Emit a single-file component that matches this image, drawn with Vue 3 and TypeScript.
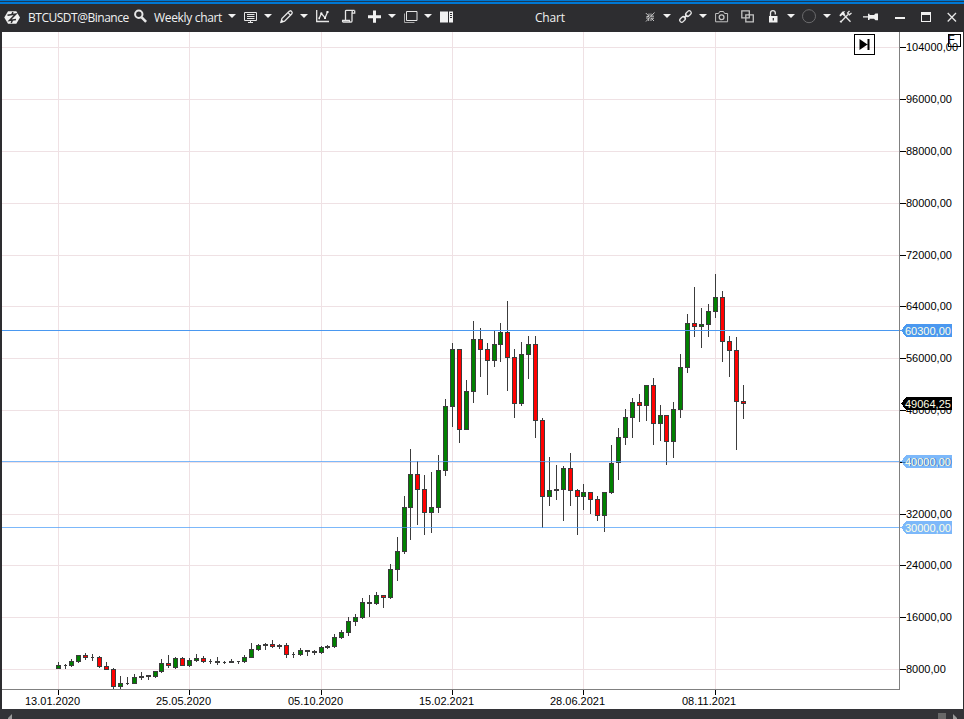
<script setup lang="ts">
type Tone = 'up' | 'down' | 'flat'
type Row = [x: number, high: number, top: number, bottom: number, low: number, kind: string]

const rows: Row[] = [
  [58, 662, 665, 669, 669, 'g'], [65, 664, 665, 666, 669, 'd'], [71, 659, 661, 666, 667, 'g'],
  [78, 655, 655, 662, 663, 'g'], [85, 653, 655, 658, 660, 'r'], [92, 654, 657, 658, 661, 'd'],
  [99, 656, 657, 667, 668, 'r'], [106, 662, 666, 670, 670, 'r'], [113, 668, 669, 687, 689, 'r'],
  [120, 676, 683, 687, 689, 'g'], [127, 677, 683, 684, 685, 'd'], [134, 674, 677, 684, 684, 'g'],
  [141, 672, 676, 678, 680, 'f'], [148, 675, 675, 677, 680, 'f'], [155, 671, 671, 677, 678, 'g'],
  [161, 659, 663, 672, 673, 'g'], [168, 655, 663, 666, 668, 'r'], [175, 657, 658, 668, 669, 'g'],
  [182, 657, 658, 666, 666, 'r'], [189, 658, 660, 666, 667, 'g'], [196, 654, 658, 661, 662, 'g'],
  [203, 656, 658, 662, 663, 'r'], [210, 659, 661, 662, 664, 'd'], [217, 657, 661, 663, 665, 'f'],
  [224, 661, 662, 663, 664, 'd'], [231, 659, 661, 663, 663, 'f'], [238, 661, 661, 662, 664, 'd'],
  [244, 655, 657, 662, 663, 'g'], [251, 643, 649, 658, 658, 'g'], [258, 644, 645, 650, 651, 'g'],
  [265, 643, 644, 646, 650, 'f'], [272, 640, 644, 647, 648, 'r'], [279, 644, 645, 647, 649, 'f'],
  [286, 643, 645, 655, 658, 'r'], [293, 652, 654, 655, 658, 'd'], [300, 648, 650, 655, 656, 'g'],
  [307, 650, 650, 652, 656, 'f'], [314, 650, 651, 653, 655, 'f'], [321, 646, 647, 653, 654, 'g'],
  [327, 645, 646, 648, 649, 'f'], [334, 634, 637, 647, 648, 'g'], [341, 630, 632, 638, 639, 'g'],
  [348, 617, 621, 633, 636, 'g'], [355, 614, 617, 622, 626, 'g'], [362, 598, 602, 618, 619, 'g'],
  [369, 595, 602, 604, 617, 'f'], [376, 592, 595, 604, 605, 'g'], [383, 595, 595, 598, 608, 'r'],
  [390, 564, 569, 598, 599, 'g'], [397, 537, 551, 570, 581, 'g'], [404, 496, 507, 552, 554, 'g'],
  [410, 449, 474, 508, 540, 'g'], [417, 461, 474, 490, 525, 'r'], [424, 475, 489, 513, 535, 'r'],
  [431, 472, 507, 513, 533, 'g'], [438, 455, 470, 508, 513, 'g'], [445, 399, 406, 471, 476, 'g'],
  [452, 343, 349, 407, 427, 'g'], [459, 349, 349, 430, 443, 'r'], [466, 380, 391, 430, 430, 'g'],
  [473, 321, 339, 392, 403, 'g'], [480, 328, 339, 350, 377, 'r'], [487, 343, 349, 361, 395, 'r'],
  [494, 331, 344, 361, 367, 'g'], [500, 323, 332, 345, 362, 'g'], [507, 301, 332, 358, 391, 'r'],
  [514, 349, 357, 404, 418, 'r'], [521, 342, 354, 404, 406, 'g'], [528, 336, 344, 355, 379, 'g'],
  [535, 336, 344, 421, 438, 'r'], [542, 418, 420, 497, 528, 'r'], [549, 457, 490, 497, 506, 'g'],
  [556, 465, 489, 491, 500, 'f'], [563, 466, 468, 490, 521, 'g'], [570, 453, 468, 491, 506, 'r'],
  [577, 489, 490, 497, 535, 'r'], [583, 484, 492, 497, 510, 'g'], [590, 492, 492, 500, 514, 'r'],
  [597, 496, 499, 516, 521, 'r'], [604, 492, 492, 516, 532, 'g'], [611, 445, 463, 493, 494, 'g'],
  [618, 428, 437, 463, 480, 'g'], [625, 409, 417, 438, 445, 'g'], [632, 398, 402, 418, 438, 'g'],
  [639, 394, 402, 406, 422, 'r'], [646, 385, 385, 406, 421, 'g'], [653, 378, 385, 424, 445, 'r'],
  [660, 405, 415, 424, 441, 'g'], [666, 415, 415, 442, 465, 'r'], [673, 402, 409, 442, 458, 'g'],
  [680, 354, 367, 410, 418, 'g'], [687, 314, 323, 368, 373, 'g'], [694, 287, 323, 327, 337, 'r'],
  [701, 308, 324, 327, 348, 'g'], [708, 304, 311, 325, 337, 'g'], [715, 274, 297, 312, 318, 'g'],
  [722, 291, 297, 342, 362, 'r'], [729, 336, 341, 351, 377, 'r'], [736, 337, 350, 402, 450, 'r'],
  [743, 385, 401, 404, 419, 'r'],
]

const tones: Record<string, Tone> = { g: 'up', r: 'down', f: 'flat', d: 'flat' }
const candles = rows.map(([x, high, top, bottom, low, kind]) => ({
  x, high, top, bottom, low,
  tone: tones[kind],
  half: kind === 'd' ? 1 : 2,
  filled: kind === 'g' || kind === 'r',
}))

const prices = [
  { y: 47, label: '104000,00' }, { y: 99, label: '96000,00' }, { y: 151, label: '88000,00' },
  { y: 203, label: '80000,00' }, { y: 255, label: '72000,00' }, { y: 306, label: '64000,00' },
  { y: 358, label: '56000,00' }, { y: 410, label: '48000,00' }, { y: 462, label: '40000,00' },
  { y: 514, label: '32000,00' }, { y: 565, label: '24000,00' }, { y: 617, label: '16000,00' },
  { y: 669, label: '8000,00' },
]
const dates = [
  { x: 58, label: '13.01.2020' }, { x: 189, label: '25.05.2020' }, { x: 321, label: '05.10.2020' },
  { x: 452, label: '15.02.2021' }, { x: 583, label: '28.06.2021' }, { x: 715, label: '08.11.2021' },
]
const levels = [
  { y: 330, tone: 'strong' }, { y: 461, tone: 'soft' }, { y: 527, tone: 'soft' },
]
const tags = [
  { y: 324, label: '60300,00', tone: 'strong' }, { y: 397, label: '49064,25', tone: 'last' },
  { y: 455, label: '40000,00', tone: 'soft' }, { y: 521, label: '30000,00', tone: 'soft' },
]
</script>

<template>
  <div class="window">
    <header class="bar">
      <svg class="icon" viewBox="0 0 16 16"><path class="solid" d="M.3 8.500 4 2.200h8.300L16 8.500l-3.700 6.300H4z" /><path class="ink logo" d="M3.500 6.300 11.800 5 5.500 11.500l6.500-1M9 3.200 7.500 6M8.500 11l-1.300 3" /></svg>
      <span class="text symbol">BTCUSDT@Binance</span>
      <svg class="icon" viewBox="0 0 16 16"><circle class="line bold" cx="4.800" cy="5.300" r="3.700" /><path class="line heavy" d="m7.700 8.400 4.400 4.400" /></svg>
      <span class="text period">Weekly chart</span>
      <svg class="caret" viewBox="0 0 8 4"><path d="M0 0h8L4 4z" /></svg>
      <svg class="icon" viewBox="0 0 16 16"><path class="line" d="M.5 3.500h12v8H.5zM3 5.500h7.500M3 7.500h7.500M3 9.500h7.500M4 13.500h5M6.500 11.500v2" /></svg>
      <svg class="caret" viewBox="0 0 8 4"><path d="M0 0h8L4 4z" /></svg>
      <svg class="icon" viewBox="0 0 16 16"><path class="line mid" d="m.9 13.300 1-3.700L9 2.500q1.200-1.400 2.600-.1 1.300 1.400.1 2.600l-7.100 7.200zM8 3.600l2.600 2.600" /><path class="solid" d="m.5 13.800 1-3.500 2.500 2.500z" /></svg>
      <svg class="caret" viewBox="0 0 8 4"><path d="M0 0h8L4 4z" /></svg>
      <svg class="icon" viewBox="0 0 16 16"><path class="line mid" d="M.7 1v11.500H13M3 9.700l2.400-5.200 3.700 4.300L11.500 3" /><path class="solid" d="M4.300 3.500h2v2h-2zM8 8h2v2H8zM10.500 2h2v2h-2zM2.500 8.500h1.500v1.800H2.500z" /></svg>
      <svg class="icon" viewBox="0 0 16 16"><path class="line mid" d="M3.500 11V2q0-.7 1-.7h8M10 3.500V12q0 1.200-1.600 1.200H1.500q-1.200 0-.9-1.700h6.800q0 1.700 1.400 1.700M12.700 1.500v2.700h-2.500V2.500q0-1.200 1.200-1.200" /></svg>
      <svg class="icon" viewBox="0 0 16 16"><path class="solid" d="M5 1.500h3v4.700h5v3H8v4.600H5V9.200H0v-3h5z" /></svg>
      <svg class="caret" viewBox="0 0 8 4"><path d="M0 0h8L4 4z" /></svg>
      <svg class="icon" viewBox="0 0 16 16"><path class="line" d="M2.500 2.500h10.500v9H2.500z" /><path class="line faint" d="M.5 4.500v9h10" /></svg>
      <svg class="caret" viewBox="0 0 8 4"><path d="M0 0h8L4 4z" /></svg>
      <svg class="icon" viewBox="0 0 16 16"><path class="solid" d="M0 2.500h8v11H0zM9 2.500h4v11H9z" /><path class="ink" d="M10 4.500h2M10 6.500h2M10 8.500h2" /></svg>
      <span class="text caption">Chart</span>
      <svg class="icon" viewBox="0 0 16 16"><path class="line dim" d="m.8 4 3 3M9.500 3.500 1 12.500M6.300 9.300l2.700 2.700M1.500 7.500H4V4.500M6 4.500v2.700h3M1 9h2.700v3M6 12V9.200h3" /></svg>
      <svg class="caret" viewBox="0 0 8 4"><path d="M0 0h8L4 4z" /></svg>
      <svg class="icon" viewBox="0 0 16 16"><g transform="rotate(-45 6.500 7.500)"><rect class="line mid" x="-.8" y="5.500" width="6.300" height="4" rx="2" /><rect class="line mid" x="7.500" y="5.500" width="6.300" height="4" rx="2" /><path class="line bold" d="M4.300 7.500h4.500" /></g></svg>
      <svg class="caret" viewBox="0 0 8 4"><path d="M0 0h8L4 4z" /></svg>
      <svg class="icon" viewBox="0 0 16 16"><path class="line dim" d="M.6 4.500h3l1.100-2h3.800l1.100 2h3v8.300H.6z" /><circle class="line dim mid" cx="6.600" cy="8.300" r="2.400" /></svg>
      <svg class="icon" viewBox="0 0 16 16"><path class="line dim mid" d="M.8 1.800h7.500v7H.8z" /><path class="cover" d="M4.800 5.800h7.500v7H4.800z" /><path class="line dim mid" d="M4.800 5.800h7.500v7H4.800zM8.300 5v3.800H4.500" /></svg>
      <svg class="icon" viewBox="0 0 16 16"><path class="solid" d="M1 7h8.500v6.500H1z" /><path class="line mid" d="M2.500 7V4q0-2.300 2.400-2.300T7.300 4v1.500" /><path class="ink" d="M5.300 9v2.500" /></svg>
      <svg class="caret" viewBox="0 0 8 4"><path d="M0 0h8L4 4z" /></svg>
      <svg class="icon" viewBox="0 0 16 16"><circle class="line ring" cx="7" cy="7.200" r="6.500" /></svg>
      <svg class="caret" viewBox="0 0 8 4"><path d="M0 0h8L4 4z" /></svg>
      <svg class="icon" viewBox="0 0 16 16"><path class="line mid" d="M2 12.800 9 5.500M5 6l6.500 6.800" /><path class="solid" d="M.3 6.300 3.500 2.500l2.800-.2-1.300 1.500 1.300 1.500-1.600 1.500-1.200-1L1.500 7.500z" /><path class="line mid" d="M10.500 2 8.600 3.900l1.700 1.900 2.200-1.900M1 12l1.500 1.500" /></svg>
      <svg class="icon" viewBox="0 0 16 16"><path class="solid" d="M0 7.200h5V4.800h1.500V6h4.500l1.500-1.500H15v6.700h-2.500L11 9.800H6.500V11H5V8.600H0z" /></svg>
      <svg class="icon" viewBox="0 0 16 16"><path class="solid" d="M0 8h10v2H0z" /></svg>
      <svg class="icon" viewBox="0 0 16 16"><path class="solid" fill-rule="evenodd" d="M0 3h10v10H0zM1 6v6h8V6z" /></svg>
      <svg class="icon" viewBox="0 0 16 16"><path class="line mid" d="m.7 4 8.300 8.500M9 4 .7 12.500" /></svg>
    </header>

    <main class="body">
      <svg class="chart" viewBox="2 32 961 677" width="961" height="677" shape-rendering="crispEdges">
        <g class="grid">
          <rect v-for="p in prices" :key="p.y" x="2" :y="p.y" width="897" height="1" />
          <rect v-for="d in dates" :key="d.x" :x="d.x" y="32" width="1" height="657" />
        </g>
        <g v-for="c in candles" :key="c.x">
          <rect class="edge" :x="c.x" :y="c.high" width="1" :height="c.low - c.high" />
          <rect class="edge" :x="c.x - c.half" :y="c.top" :width="c.half * 2 + 1" :height="c.bottom - c.top" />
          <rect v-if="c.filled" :class="c.tone" :x="c.x - 1" :y="c.top + 1" width="3" :height="c.bottom - c.top - 2" />
        </g>
        <rect v-for="l in levels" :key="l.y" :class="l.tone" x="2" :y="l.y" width="899" height="1" />
        <rect class="axis" x="899" y="32" width="1" height="658" />
        <rect class="axis" x="2" y="689" width="898" height="1" />
        <g v-for="p in prices" :key="p.label">
          <rect x="900" :y="p.y" width="6" height="1" />
          <text x="906" :y="p.y + 4">{{ p.label }}</text>
        </g>
        <g v-for="d in dates" :key="d.label">
          <rect :x="d.x" y="690" width="1" height="5" />
          <text :x="d.x - 33" y="705">{{ d.label }}</text>
        </g>
        <g v-for="t in tags" :key="t.y">
          <path :class="['tag', t.tone]" :d="`M901 ${t.y + 6.5}l5-6.5h46v13h-46z`" />
          <text class="tag-text" x="905" :y="t.y + 11">{{ t.label }}</text>
        </g>
        <rect class="frame" x="854.500" y="34.500" width="20" height="20" />
        <path shape-rendering="auto" d="M859.500 39v11l8-5.500zM867.500 39h2v11h-2z" />
        <rect class="frame" x="948.500" y="34.500" width="12" height="12" />
        <text x="948" y="43">F</text>
      </svg>
    </main>

    <footer class="foot">
      <svg class="thumbs" viewBox="0 0 964 10" width="964" height="10">
        <path d="M12 5v5H8V9z" />
        <path class="block" d="M938 4h8v6h-8z" />
        <path d="M953 5l4 4v1h-4z" />
      </svg>
    </footer>
  </div>
</template>

<style>
body {
  overflow: hidden;
}
</style>

<style scoped>
.window {
  width: 964px;
  height: 719px;
  background: #2d2d30;
  display: flex;
  flex-direction: column;
  overflow: hidden;
}
.bar {
  box-sizing: border-box;
  height: 32px;
  flex: none;
  padding: 5px 0 3px 4px;
  background: linear-gradient(#0078d4 0 1px, #1c3a54 1px 2px, #0078d4 2px 4px, #2d2d30 4px);
  display: grid;
  grid-template-columns:
    24px 106px 20px 74px 16px 20px 16px 20px 16px 26px 26px 20px 16px 20px 16px 95px
    110px 18px 16px 20px 16px 26px 27px 19px 15px 21px 16px 24px 32px 26px 26px 17px;
  align-items: center;
}
.text {
  font: 12px/16px "Open Sans", "Noto Sans", sans-serif;
  color: #f1f1f1;
  white-space: nowrap;
  padding-top: 1px;
}
.symbol { letter-spacing: -0.48px; }
.period { letter-spacing: -0.33px; }
.caption { letter-spacing: -0.2px; }
.icon {
  display: block;
  width: 16px;
  height: 16px;
  overflow: visible;
}
.caret {
  display: block;
  width: 8px;
  height: 4px;
  margin-bottom: 2px;
  fill: #f1f1f1;
}
.solid { fill: #f1f1f1; }
.cover { fill: #2d2d30; }
.ink { fill: none; stroke: #2d2d30; stroke-width: 1.2; }
.logo { stroke-width: 1.5; }
.line { fill: none; stroke: #e6e6e6; stroke-width: 1; }
.mid { stroke-width: 1.3; }
.bold { stroke-width: 2; }
.heavy { stroke-width: 2.6; }
.faint { stroke: #a8a8a8; }
.dim { stroke: #c4c4c4; }
.ring { stroke: #6b6b6d; }
.body {
  flex: none;
  height: 677px;
  padding: 0 1px 0 2px;
}
.chart {
  display: block;
  background: #fff;
}
.chart text {
  font: 11px "Liberation Sans", Arial, sans-serif;
  fill: #000;
}
.grid { fill: #efe1e4; }
.edge { fill: #3c3c3c; }
.up { fill: #008000; }
.down { fill: #ff0000; }
.axis { fill: #808080; }
.strong { fill: #4a98f0; }
.soft { fill: #4a9cf8; fill-opacity: 0.72; }
.last { fill: #000; }
.chart .tag-text { fill: #ffffe6; }
.frame { fill: none; stroke: #000; }
.foot {
  flex: none;
  height: 10px;
  background: #333337;
}
.thumbs {
  display: block;
  fill: #9a9a9a;
}
.block { fill: #686868; }
</style>
